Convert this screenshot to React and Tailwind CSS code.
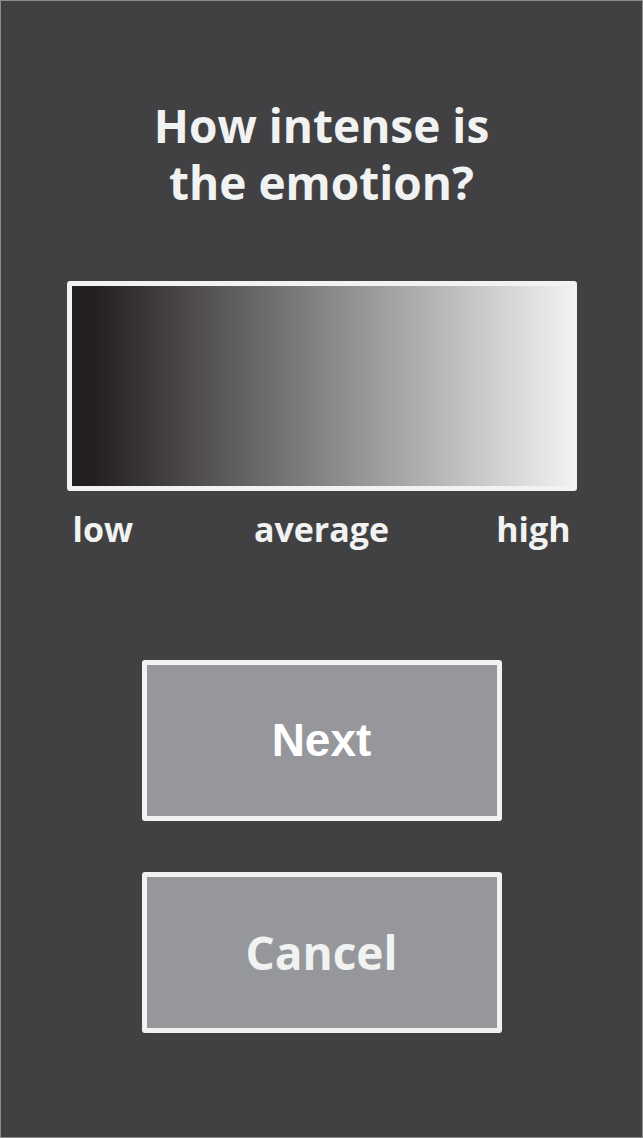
export default function App() {
  const os = { fontFamily: '"Open Sans", "Noto Sans", sans-serif' };
  return (
    <div className="w-[643px] h-[1138px] border border-[#8c8c8e] bg-[#414143] flex flex-col items-center" style={os}>
      <h1 className="mt-[96px] text-center text-[46px] leading-[57px] font-bold text-[#f1f2f2]">
        How intense is
        <br />
        the emotion?
      </h1>
      <div className="mt-[70px] w-[510px] h-[210px] rounded-[3px] border-[5px] border-[#f1f2f2] bg-[linear-gradient(to_right,#231f20_4%,#f1f1f1_100%)]" />
      <div className="mt-[16px] w-[510px] px-[6px] grid grid-cols-3 text-[34px] leading-[44px] font-bold text-[#f1f2f2]">
        <span className="text-left">low</span>
        <span className="text-center">average</span>
        <span className="text-right">high</span>
      </div>
      <button className="mt-[109px] w-[360px] h-[161px] rounded-[3px] border-[5px] border-[#f1f2f2] bg-[#96979a] flex items-center justify-center text-[46px] font-bold text-white" style={{ fontFamily: '"Liberation Sans", Arial, sans-serif' }}>
        Next
      </button>
      <button className="mt-[51px] w-[360px] h-[161px] rounded-[3px] border-[5px] border-[#f1f2f2] bg-[#96979a] flex items-center justify-center text-[46px] font-bold text-[#f1f2f2]">
        Cancel
      </button>
    </div>
  );
}
